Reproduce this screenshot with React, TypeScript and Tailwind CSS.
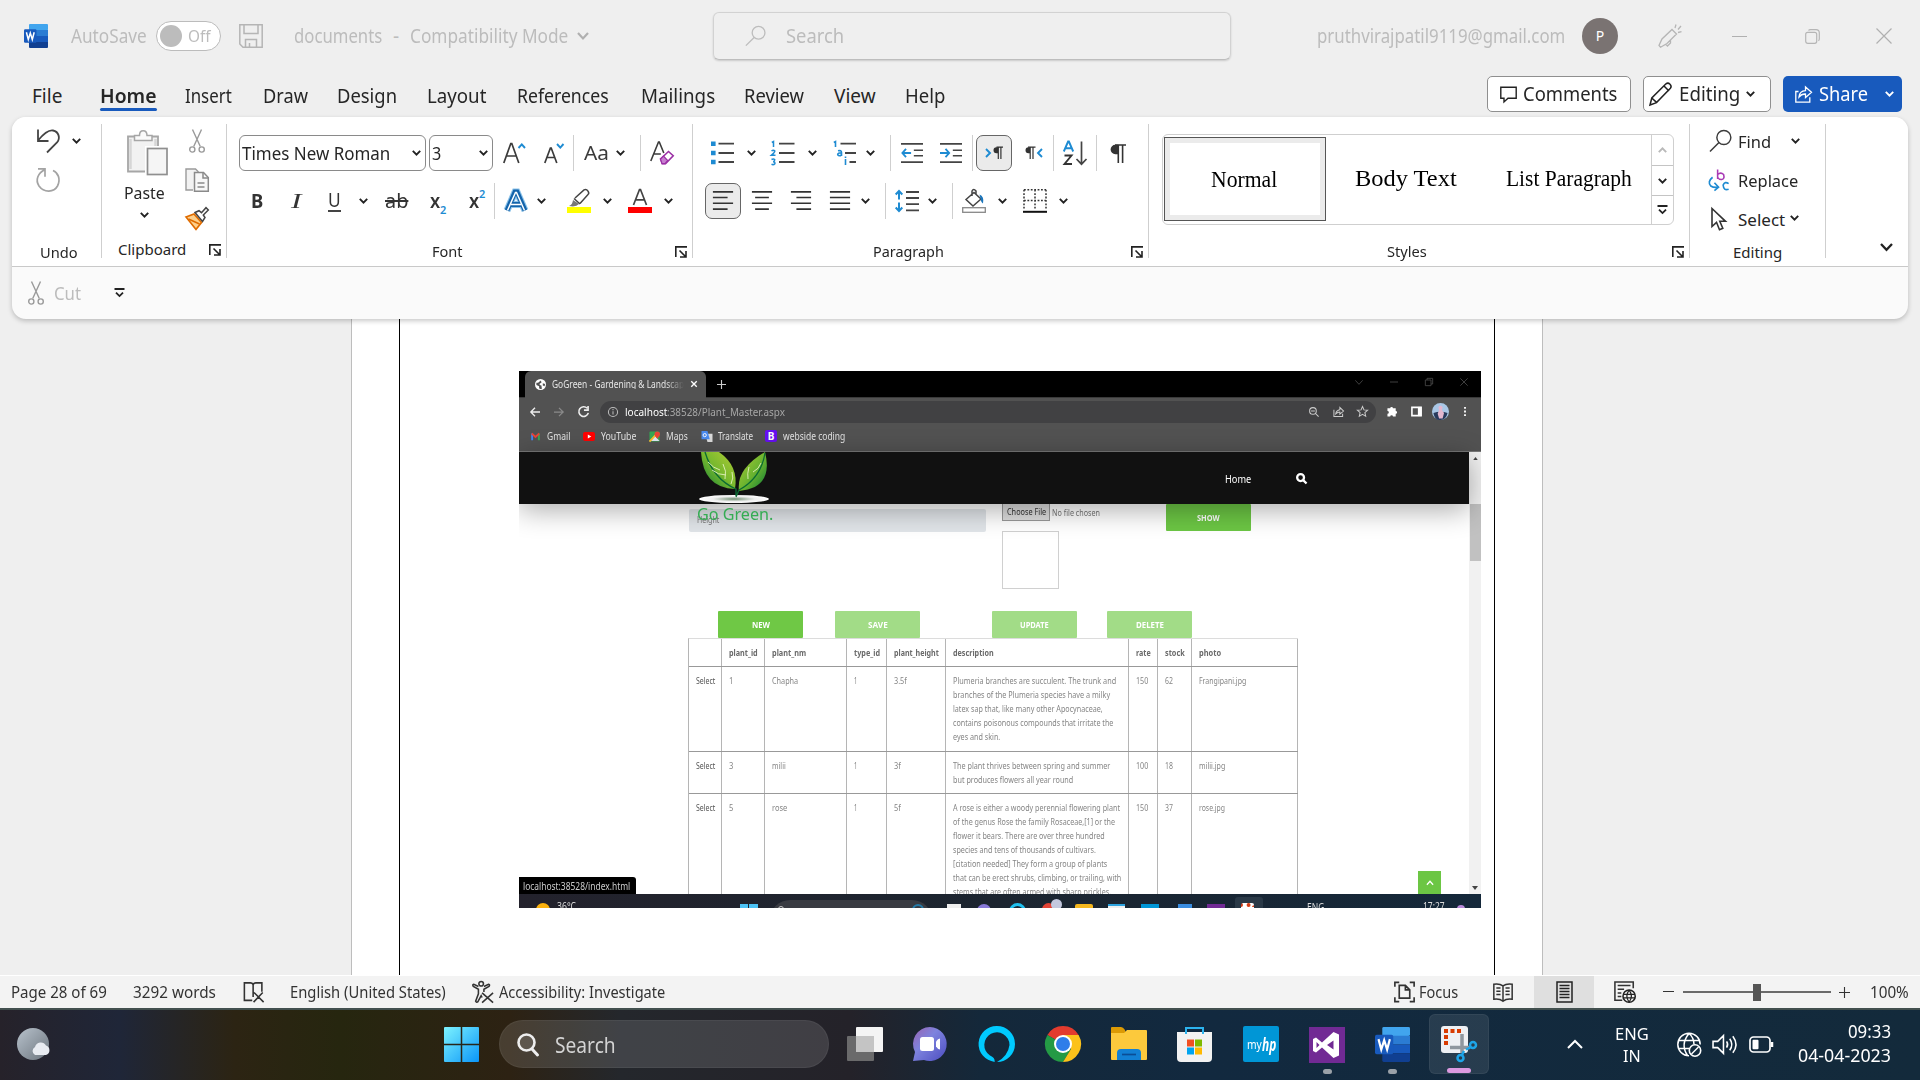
import React, { useLayoutEffect, useRef, useState } from "react";

/* Text squeezed or stretched horizontally to a given width. */
function T({ w, className = "", children }: { w: number; className?: string; children: React.ReactNode }) {
  const ref = useRef<HTMLSpanElement>(null);
  const [scale, setScale] = useState(1);
  useLayoutEffect(() => {
    if (ref.current) setScale(w / ref.current.offsetWidth);
  }, [w]);
  return (
    <span className={"block shrink-0 " + className} style={{ width: w }}>
      <span ref={ref} className="inline-block origin-left whitespace-nowrap" style={{ transform: `scaleX(${scale})` }}>
        {children}
      </span>
    </span>
  );
}

type IP = { className?: string; children?: React.ReactNode; box?: string };
const Svg = ({ className = "", children, box = "0 0 24 24" }: IP) => (
  <svg viewBox={box} fill="none" className={"block shrink-0 overflow-visible " + className}>
    {children}
  </svg>
);
const Chev = ({ className = "" }: { className?: string }) => (
  <Svg box="0 0 9 6" className={"h-[6px] w-[9px] text-[#222] " + className}>
    <path d="M.8.8 4.5 4.6 8.2.8" stroke="currentColor" strokeWidth="1.9" />
  </Svg>
);
const Sep = ({ className = "" }: { className?: string }) => <div className={"h-[36px] w-px shrink-0 bg-[#cfcfcf] " + className} />;
const Launcher = ({ className = "" }: { className?: string }) => (
  <Svg box="0 0 12 12" className={"h-[12px] w-[12px] " + className}>
    <path d="M.8 11V.9H12M4.5 4.5l6 6M11 5v6H5" stroke="#222" strokeWidth="1.6" />
  </Svg>
);
const More = ({ className = "" }: { className?: string }) => (
  <Svg box="0 0 11 10" className={"h-[10px] w-[11px] " + className}>
    <path d="M.5 1h10M2 4.6l3.5 3.5L9 4.6" stroke="#222" strokeWidth="1.8" />
  </Svg>
);
const Scissors = ({ className = "" }: { className?: string }) => (
  <Svg box="0 0 16 24" className={className}>
    <g stroke="#9a9a9a" strokeWidth="1.4">
      <path d="M3.5.5 11.3 17.5M12.5.5 4.7 17.5" />
      <circle cx="3.3" cy="20.5" r="2.6" />
      <circle cx="12.7" cy="20.5" r="2.6" />
    </g>
  </Svg>
);
const Magnifier = ({ className = "" }: { className?: string }) => (
  <Svg className={className}>
    <circle cx="15.5" cy="8.3" r="7.3" stroke="currentColor" strokeWidth="1.5" />
    <path d="M10.4 13.6 1 23" stroke="currentColor" strokeWidth="1.6" />
  </Svg>
);
const WordIcon = ({ className = "" }: { className?: string }) => (
  <Svg className={className}>
    <rect x="5" y="0" width="19" height="6.2" rx="1" fill="#41a5ee" />
    <rect x="5" y="6" width="19" height="6" fill="#2b7cd3" />
    <rect x="5" y="12" width="19" height="6" fill="#185abd" />
    <path d="M5 18h19v5a1 1 0 0 1-1 1H6a1 1 0 0 1-1-1z" fill="#103f91" />
    <rect x="0" y="5.3" width="12.5" height="13.4" rx="1.2" fill="#185abd" />
    <path d="m2.4 8.3 1.9 7.2 2-6.4 2 6.4 1.9-7.2" stroke="#fff" strokeWidth="1.5" />
  </Svg>
);

const tabs: [string, number, string][] = [
  ["File", 30, "ml-[32px]"],
  ["Home", 56, "ml-[38px]"],
  ["Insert", 47, "ml-[28px]"],
  ["Draw", 45, "ml-[31px]"],
  ["Design", 60, "ml-[29px]"],
  ["Layout", 59, "ml-[30px]"],
  ["References", 92, "ml-[31px]"],
  ["Mailings", 74, "ml-[32px]"],
  ["Review", 60, "ml-[29px]"],
  ["View", 42, "ml-[30px]"],
  ["Help", 40, "ml-[29px]"],
];

function TitleBar() {
  return (
    <div className="flex h-[72px] items-center text-[19px] leading-none text-[#bcbcbc]">
      <WordIcon className="ml-[24px] h-[24px] w-[24px]" />
      <T w={76} className="ml-[23px]">AutoSave</T>
      <div className="ml-[9px] flex h-[30px] w-[65px] items-center rounded-full border border-[#bcbcbc] bg-white">
        <div className="ml-[3px] h-[22px] w-[22px] rounded-full bg-[#bcbcbc]" />
        <T w={23} className="ml-[6px] text-[16px]">Off</T>
      </div>
      <Svg className="ml-[18px] h-[24px] w-[24px]">
        <path d="M.8.8h22.4v22.4H4L.8 20zM5 1v8.5h14V1M6.5 23v-7.5h11V23M10.5 23v-4" stroke="#b5b5b5" strokeWidth="1.5" />
      </Svg>
      <T w={88} className="ml-[31px]">documents</T>
      <T w={6} className="ml-[11px]">-</T>
      <T w={158} className="ml-[11px]">Compatibility Mode</T>
      <Svg box="0 0 12 8" className="ml-[9px] h-[8px] w-[12px]"><path d="m1 1 5 5.4L11 1" stroke="#b0b0b0" strokeWidth="2.2" /></Svg>
      <div className="ml-[124px] flex h-[48px] w-[518px] items-center rounded-[6px] border border-[#d2d2d2] border-b-[#bdbdbd] shadow-[0_1px_2px_#00000028]">
        <Magnifier className="ml-[31px] h-[22px] w-[21px] text-[#bdbdbd]" />
        <T w={58} className="ml-[20px]">Search</T>
      </div>
      <T w={248} className="ml-[86px]">pruthvirajpatil9119@gmail.com</T>
      <div className="ml-[17px] flex h-[36px] w-[36px] items-center justify-center rounded-full bg-[#7a7372] text-[14px] text-white">P</div>
      <Svg className="ml-[40px] h-[24px] w-[24px]">
        <path d="M14 5.5 18.5 10 9 19.5 2.5 23.2 1 21.5 4 15zM12.5 16v3l-3 3-1.7-1.8M17 4l1-3.5M20 5.5l3-3.5M20 8.5l3.5-.8" stroke="#b5b5b5" strokeWidth="1.3" />
      </Svg>
      <div className="ml-[50px] h-px w-[15px] bg-[#b0b0b0]" />
      <Svg box="0 0 15 15" className="ml-[58px] h-[15px] w-[15px]">
        <rect x=".7" y="3.3" width="11" height="11" rx="2" stroke="#b5b5b5" strokeWidth="1.2" />
        <path d="M3.5 1.5Q4 .7 5.5.7H11a3.3 3.3 0 0 1 3.3 3.3v6q0 1-.9 1.7" stroke="#b5b5b5" strokeWidth="1.2" />
      </Svg>
      <Svg box="0 0 16 16" className="ml-[56px] h-[16px] w-[16px]"><path d="m.5.5 15 15m0-15-15 15" stroke="#b0b0b0" strokeWidth="1.2" /></Svg>
    </div>
  );
}

function TabBar() {
  return (
    <div className="flex h-[45px] text-[19px] leading-none text-[#262626]">
      {tabs.map(([name, w, gap]) => (
        <div key={name} className={"flex h-[41px] flex-col pt-[15px] " + gap + (name === "Home" ? " font-semibold" : "")}>
          <T w={w}>{name}</T>
          {name === "Home" && <div className="mt-[2px] h-[3px] w-[57px] shrink-0 rounded bg-[#185abd]" />}
        </div>
      ))}
      <div className="mt-[4px] mr-[18px] ml-auto flex h-[36px]">
        <div className="flex w-[144px] items-center rounded-[5px] border border-[#8f8f8f] bg-white">
          <Svg box="0 0 17 17" className="ml-[12px] h-[17px] w-[17px]"><path d="M.8 1.2h15.4v11H8l-4 3.7v-3.7H.8z" stroke="#222" strokeWidth="1.4" /></Svg>
          <T w={94} className="ml-[6px]">Comments</T>
        </div>
        <div className="ml-[12px] flex w-[128px] items-center rounded-[5px] border border-[#8f8f8f] bg-white">
          <Svg className="ml-[5px] h-[24px] w-[24px]"><path d="m1 23 1.8-7L17 1.8q2-1.5 4 .4t.4 4L7.5 20.6zM15 4l5 5M2.8 16l5 4.6" stroke="#222" strokeWidth="1.5" /></Svg>
          <T w={61} className="ml-[6px]">Editing</T>
          <Chev className="ml-[6px]" />
        </div>
        <div className="ml-[12px] flex w-[119px] items-center rounded-[5px] bg-[#185abd] text-white">
          <Svg box="0 0 17 18" className="ml-[12px] h-[18px] w-[17px]">
            <path d="M3.5 6.5H.8v10.7h14v-5M4 12q.5-6 6.5-6.3V2l6 5.3-6 5.2V9Q6.500 8.800 4 12Z" stroke="#fff" strokeWidth="1.3" />
          </Svg>
          <T w={49} className="ml-[7px]">Share</T>
          <Chev className="ml-[17px] text-white" />
        </div>
      </div>
    </div>
  );
}

const aligns = {
  left: "M1 2h22M1 8.200h16M1 14.500h22M1 20.800h16",
  center: "M1 2h22M4.500 8.200h15M1 14.500h22M4.500 20.800h15",
  right: "M1 2h22M7 8.200h16M1 14.500h22M7 20.800h16",
  justify: "M1 2h22M1 8.200h22M1 14.500h22M1 20.800h22",
};
const Align = ({ d, className = "" }: { d: string; className?: string }) => (
  <Svg className={"h-[22px] w-[22px] " + className}><path d={d} stroke="#333" strokeWidth="1.8" /></Svg>
);

function FontGroup() {
  return (
    <div className="flex h-[134px] w-[466px] flex-col border-r border-[#cfcfcf] pt-[11px] leading-none">
      <div className="flex h-[36px] items-center text-[18px]">
        <div className="ml-[12px] flex h-[36px] w-[187px] items-center rounded-[6px] border border-[#8a8a8a]">
          <T w={148} className="ml-[2px]">Times New Roman</T>
          <Chev className="ml-[22px]" />
        </div>
        <div className="ml-[3px] flex h-[36px] w-[64px] items-center rounded-[6px] border border-[#8a8a8a]">
          <T w={9} className="ml-[2px]">3</T>
          <Chev className="ml-[38px]" />
        </div>
        <Svg box="0 0 22 22" className="ml-[10px] h-[22px] w-[22px]">
          <path d="m.8 21 7-19.500h1l7 19.500M3.500 14h9.800" stroke="#3b3b3b" strokeWidth="1.700" />
          <path d="m15.500 6 3.300-3.600L22 6" stroke="#1e8bd2" strokeWidth="1.900" />
        </Svg>
        <Svg box="0 0 20 22" className="ml-[19px] h-[22px] w-[20px]">
          <path d="m.8 21 5.600-15h.8l5.600 15M3 15.500h7.500" stroke="#3b3b3b" strokeWidth="1.700" />
          <path d="m13 2 3.300 3.600L19.500 2" stroke="#1e8bd2" strokeWidth="1.900" />
        </Svg>
        <Sep className="ml-[9px]" />
        <T w={25} className="ml-[10px] text-[20px] text-[#3b3b3b]">Aa</T>
        <Chev className="ml-[7px]" />
        <Sep className="ml-[15px]" />
        <Svg className="ml-[9px] h-[24px] w-[24px]">
          <path d="m.8 20 7.700-19h.8l4.500 11M3.800 13h7" stroke="#3b3b3b" strokeWidth="1.600" />
          <path d="m10.500 18 8-7.500 4.700 4.200-7.700 8h-3.200z" fill="#fff" stroke="#9b2fa5" strokeWidth="1.600" />
          <path d="m10.500 18 3-3 4.200 4.500-2.700 3.200h-3z" fill="#c77fd0" stroke="#9b2fa5" strokeWidth="1.200" />
        </Svg>
      </div>
      <div className="mt-[12px] flex h-[36px] items-center text-[20px] text-[#333]">
        <T w={12} className="ml-[24px] font-bold">B</T>
        <T w={10} className="ml-[28px] font-['Liberation_Serif'] text-[22px] italic">I</T>
        <div className="ml-[27px] mt-[1px] border-b-2 border-[#444] pb-px"><T w={13} className="h-[18px] leading-[18px]">U</T></div>
        <Chev className="ml-[18px]" />
        <T w={23} className="ml-[17px] text-[19px]"><span className="line-through decoration-[1.5px]">ab</span></T>
        <div className="ml-[22px] flex w-[17px] items-center font-semibold">
          <T w={10}>x</T><T w={6} className="mt-[16px] text-[11px] text-[#1e8bd2]">2</T>
        </div>
        <div className="ml-[22px] flex w-[17px] items-center font-semibold">
          <T w={10}>x</T><T w={6} className="mb-[16px] text-[11px] text-[#1e8bd2]">2</T>
        </div>
        <Sep className="ml-[8px]" />
        <Svg className="ml-[9px] h-[24px] w-[24px]">
          <path d="m3 21.500 8-18.500h2l8 18.500M6 15.500h12" stroke="#8cc3ea" strokeWidth="7" />
          <path d="m3 21.500 8-18.500h2l8 18.500M6 15.500h12" stroke="#1464ab" strokeWidth="4.800" />
          <path d="m3.500 21.500 8-18h1l8 18M7 15.500h10" stroke="#fff" strokeWidth="1.500" />
        </Svg>
        <Chev className="ml-[9px]" />
        <Svg className="ml-[21px] h-[24px] w-[24px]">
          <path d="M2 17c3-1 3.500-3 4-6l6 4q-3 3.500-10 2Z" fill="#777" />
          <path d="M8 9 17 .9q2.500-1 4 1.300t0 3.300L13 14.500M7 9.500l6 5.500" stroke="#444" strokeWidth="1.500" />
          <rect y="18" width="24" height="6" fill="#ff0" />
        </Svg>
        <Chev className="ml-[12px]" />
        <Svg className="ml-[16px] h-[24px] w-[24px]">
          <path d="m5.500 16 6-15.500h1l6 15.500M8 10.800h8" stroke="#444" strokeWidth="1.700" />
          <rect y="18" width="24" height="6" fill="#f00" />
        </Svg>
        <Chev className="ml-[12px]" />
      </div>
      <div className="mt-[25px] flex h-[16px] shrink-0 items-center text-[15px]">
        <T w={31} className="mb-[2px] ml-[205px]">Font</T>
        <Launcher className="mr-[5px] ml-auto" />
      </div>
    </div>
  );
}

function ParagraphGroup() {
  const blue = "#1e8bd2";
  return (
    <div className="flex h-[134px] w-[456px] flex-col border-r border-[#cfcfcf] pt-[11px] leading-none">
      <div className="flex h-[36px] items-center">
        <Svg className="ml-[18px] h-[24px] w-[24px]">
          <path d="M0 2.700h4.600M0 12h4.600M0 21h4.600" stroke={blue} strokeWidth="4.600" />
          <path d="M7.500 2.700H23M7.500 12H23M7.500 21H23" stroke="#444" strokeWidth="1.800" />
        </Svg>
        <Chev className="ml-[12px]" />
        <Svg className="ml-[15px] h-[24px] w-[24px]">
          <path d="M.8 1.500 2.500.6V6M.5 10q2-1.700 3.300 0 0 1.500-3.300 4.200H4.500M.5 18.500q2-1 3.200 0 .3 1.700-1.500 2.200 2 .3 1.700 2Q2.500 24.200.5 23.300" stroke={blue} strokeWidth="1.500" />
          <path d="M8 2.700h15.500M8 12h15.500M8 21h15.500" stroke="#444" strokeWidth="1.800" />
        </Svg>
        <Chev className="ml-[13px]" />
        <Svg className="ml-[16px] h-[24px] w-[24px]">
          <path d="M.8 1.500 2.500.6V6M5 9.800q3.500-.8 3.500 1.700V15M8.500 12.200Q4.500 11.500 4.700 13.800q1.500 2 3.800 0M12.500 18v6M12.500 15.500v1.500" stroke={blue} strokeWidth="1.600" />
          <path d="M7.500 2.700H23M12 12H23M16.500 21H23" stroke="#444" strokeWidth="1.800" />
        </Svg>
        <Chev className="ml-[9px]" />
        <Sep className="ml-[15px]" />
        <Svg className="ml-[10px] h-[22px] w-[22px]">
          <path d="M0 2h24M14 9h10M14 15h10M0 22h24" stroke="#444" strokeWidth="1.800" />
          <path d="M11 12H1.500M5.500 7.500 1.500 12l4 4.500" stroke={blue} strokeWidth="2" />
        </Svg>
        <Svg className="ml-[17px] h-[22px] w-[22px]">
          <path d="M0 2h24M14 9h10M14 15h10M0 22h24" stroke="#444" strokeWidth="1.800" />
          <path d="M0 12h9.500M6 7.500l4 4.500-4 4.500" stroke={blue} strokeWidth="2" />
        </Svg>
        <Sep className="ml-[10px]" />
        <div className="ml-[3px] flex h-[36px] w-[36px] items-center rounded-[7px] border border-[#666] bg-[#ebebeb]">
          <Svg box="0 0 18 14" className="ml-[8px] h-[14px] w-[18px]">
            <path d="m1 3 4 4-4 4" stroke={blue} strokeWidth="1.900" />
            <path d="M17.500 1.200H11.500a3 3 0 0 0 0 6h1.500V1.500z" fill="#333" /><path d="M11.500 1.200h6.500M13.300 1.200V13M15.900 1.200V13" stroke="#333" strokeWidth="1.200" />
          </Svg>
        </div>
        <Svg box="0 0 18 14" className="ml-[13px] h-[14px] w-[18px]">
          <path d="m17 3-4 4 4 4" stroke={blue} strokeWidth="1.900" />
          <path d="M8 1.200H3.500a3 3 0 0 0 0 6H5V1.500z" fill="#333" /><path d="M3 1.200h7.500M5.200 1.200V13M8 1.200V13" stroke="#333" strokeWidth="1.200" />
        </Svg>
        <Sep className="ml-[10px]" />
        <Svg className="ml-[9px] h-[24px] w-[24px]">
          <path d="m.8 10.500 4.300-10h.8l4.300 10M2.300 7.300h6.500" stroke={blue} strokeWidth="1.900" />
          <path d="M1.500 14.500h7L1.500 23h7.500" stroke="#333" strokeWidth="1.900" />
          <path d="M18.500.5V23M13.500 18l5 5.200 5-5.200" stroke="#444" strokeWidth="1.700" />
        </Svg>
        <Sep className="ml-[9px]" />
        <Svg box="0 0 16 19" className="ml-[13px] h-[19px] w-[16px]">
          <path d="M9 .8H5.300a4.700 4.700 0 0 0 0 9.400H8V1z" fill="#333" /><path d="M5 1h11M8.300 1v18M12.600 1v18" stroke="#333" strokeWidth="1.600" />
        </Svg>
      </div>
      <div className="mt-[12px] flex h-[36px] items-center">
        <div className="ml-[12px] flex h-[36px] w-[36px] items-center justify-center rounded-[7px] border border-[#666] bg-[#ebebeb]"><Align d={aligns.left} /></div>
        <Align d={aligns.center} className="ml-[10px]" />
        <Align d={aligns.right} className="ml-[17px]" />
        <Align d={aligns.justify} className="ml-[17px]" />
        <Chev className="ml-[10px]" />
        <Sep className="ml-[15px]" />
        <Svg className="ml-[9px] h-[24px] w-[24px]">
          <path d="M4 2v8.500M.7 5.500 4 2l3.300 3.500M4 13.500V22M.7 18.500 4 22l3.300-3.500" stroke={blue} strokeWidth="2" />
          <path d="M11 3h13M11 9h13M11 15.200h13M11 21.300h13" stroke="#444" strokeWidth="1.800" />
        </Svg>
        <Chev className="ml-[9px]" />
        <Sep className="ml-[15px]" />
        <Svg className="ml-[9px] h-[24px] w-[24px]">
          <path d="m4 10.500 8-7 7 6.500-8 7zM10 7V2q1.500-3 4 0v3" stroke="#444" strokeWidth="1.500" />
          <path d="M17.500 5.500q5 2 3.500 9-2-1-2.500-5z" fill="#1b75bb" />
          <rect x=".7" y="18.700" width="22.600" height="4.600" stroke="#888" strokeWidth="1.300" />
        </Svg>
        <Chev className="ml-[12px]" />
        <Svg className="ml-[16px] h-[24px] w-[24px]">
          <path d="M1 .8h22M1 .8v20M23 .8v20M12 .8v20M1 11.500h22" stroke="#333" strokeWidth="1.500" strokeDasharray="1.800 1.600" />
          <path d="M0 22.800h24" stroke="#111" strokeWidth="2" />
        </Svg>
        <Chev className="ml-[12px]" />
      </div>
      <div className="mt-[25px] flex h-[16px] shrink-0 items-center text-[15px]">
        <T w={71} className="mb-[2px] ml-[180px]">Paragraph</T>
        <Launcher className="mr-[5px] ml-auto" />
      </div>
    </div>
  );
}

function StylesGroup() {
  return (
    <div className="flex h-[134px] w-[541px] flex-col border-r border-[#cfcfcf] pt-[10px] leading-none">
      <div className="ml-[13px] flex h-[91px] w-[512px] rounded-[6px] border border-[#cfcfcf] font-['Liberation_Serif'] text-[23px] text-black">
        <div className="mt-[2px] ml-px flex h-[84px] w-[162px] shrink-0 items-center justify-center border border-[#555] bg-[#ebebeb] p-[5px]">
          <div className="flex h-full w-full items-center justify-center bg-white pr-[2px]"><T w={66}>Normal</T></div>
        </div>
        <div className="flex items-center pb-[3px]">
          <T w={102} className="ml-[29px]">Body Text</T>
          <T w={126} className="ml-[49px]">List Paragraph</T>
        </div>
        <div className="ml-auto flex w-[22px] flex-col items-center border-l border-[#cfcfcf]">
          <div className="flex h-[31px] w-full items-center justify-center border-b border-[#c4c4c4]"><Chev className="rotate-180 text-[#b9b9b9]" /></div>
          <div className="flex h-[30px] w-full items-center justify-center border-b border-[#c4c4c4]"><Chev /></div>
          <div className="flex h-[28px] w-full items-center justify-center"><More className="h-[9px] w-[10px]" /></div>
        </div>
      </div>
      <div className="mt-[19px] flex h-[16px] shrink-0 items-center text-[15px]">
        <T w={40} className="mb-[2px] ml-[238px]">Styles</T>
        <Launcher className="mr-[5px] ml-auto" />
      </div>
    </div>
  );
}

function Ribbon() {
  return (
    <div className="relative z-10 mx-[12px] h-[202px] rounded-[14px] bg-[#fafafa] text-[#262626] shadow-[0_2px_5px_#00000038]">
      <div className="flex h-[150px] rounded-t-[14px] border-b border-[#c9c9c9] bg-white pt-[7px] leading-none">
        <div className="flex h-[134px] w-[90px] flex-col border-r border-[#cfcfcf] pt-[5px]">
          <div className="flex items-center">
            <Svg className="ml-[24px] h-[24px] w-[24px]"><path d="M2 .5v11.500h10.500M2 11.500C9 3 13 .8 17 1.500c6 1 7.500 8 4 12L11 23.500" stroke="#444" strokeWidth="1.800" /></Svg>
            <Chev className="ml-[12px]" />
          </div>
          <Svg className="mt-[15px] ml-[24px] h-[24px] w-[24px]"><path d="M2 .8h7v8M9 1.500C2 5-1 12 3 18c5 7 15 6.500 18.500 0C25 11 22 4.500 17 2.500" stroke="#a3a3a3" strokeWidth="1.700" /></Svg>
          <div className="mt-[53px] ml-[28px] text-[15px]"><T w={38}>Undo</T></div>
        </div>
        <div className="flex h-[134px] w-[125px] flex-col border-r border-[#cfcfcf] pt-[5px]">
          <div className="flex h-[112px]">
            <div className="ml-[20px] flex w-[45px] flex-col items-center">
              <Svg box="0 0 41 45" className="mt-px ml-[6px] h-[45px] w-[41px]">
                <path d="M1 6.500h30v35H1z" fill="#f2f2f2" stroke="#a6a6a6" strokeWidth="1.800" />
                <path d="M3.500 9v30M28.500 9v20" stroke="#d6d6d6" strokeWidth="2.500" />
                <path d="M7.500 10.500V5.500h5q0-4.700 3.700-4.700T20 5.500h5v5z" fill="#fafafa" stroke="#a6a6a6" strokeWidth="1.500" />
                <rect x="18" y="16" width="23" height="30" fill="#fff" />
                <rect x="20.500" y="18.500" width="19.500" height="26" fill="#f5f5f5" stroke="#8f8f8f" strokeWidth="1.700" />
              </Svg>
              <T w={41} className="mt-[9px] text-[17px]">Paste</T>
              <Chev className="mt-[11px]" />
            </div>
            <div className="ml-[18px] flex w-[24px] flex-col items-center">
              <Scissors className="h-[24px] w-[16px]" />
              <Svg className="mt-[15px] h-[24px] w-[24px]">
                <path d="M8 22H1V1h9.500l3 3" fill="#f2f2f2" stroke="#9a9a9a" strokeWidth="1.400" />
                <path d="M9.500 4.500h9l4.800 5v13.800H9.500z" fill="#f7f7f7" stroke="#8a8a8a" strokeWidth="1.500" />
                <path d="M18 5v5h5M12.500 15h7M12.500 19h7" stroke="#8a8a8a" strokeWidth="1.500" />
              </Svg>
              <Svg className="mt-[15px] h-[24px] w-[24px]">
                <path d="M1 10 9 7l7.500 8.500L11 22.500z" fill="#fdd08c" stroke="#e06c00" strokeWidth="1.700" />
                <path d="m3.500 12 11 5" stroke="#e06c00" strokeWidth="1.500" />
                <path d="m10 5.500 4-1.800 2.500 2 4.500-5 2.300 2.300-5 5 1.700 2.500-2.500 4z" fill="#fff" stroke="#444" strokeWidth="1.500" />
              </Svg>
            </div>
          </div>
          <div className="mt-[5px] flex h-[16px] shrink-0 items-center text-[15px]">
            <T w={68} className="mb-[2px] ml-[16px]">Clipboard</T>
            <Launcher className="mr-[5px] ml-auto" />
          </div>
        </div>
        <FontGroup />
        <ParagraphGroup />
        <StylesGroup />
        <div className="flex h-[134px] w-[136px] flex-col border-r border-[#cfcfcf] pt-[5px] text-[17px]">
          <div className="flex h-[24px] items-center">
            <Magnifier className="ml-[19px] h-[24px] w-[23px] text-[#3b3b3b]" />
            <T w={33} className="ml-[6px]">Find</T><Chev className="ml-[20px]" />
          </div>
          <div className="mt-[15px] flex h-[24px] items-center">
            <Svg className="ml-[18px] h-[24px] w-[22px]">
              <path d="M10.500.5V11M10.500 6q3.500-3 6.500 0 1.500 5-2 5.500-3 .3-4.500-2.500" stroke="#a93bb5" strokeWidth="1.700" />
              <path d="M22.500 16q-4-3-6 1.500.5 6.500 6 4.500M5 9Q-1 14 3 18.500q3 2 7.500 1.500M7 15l4.500 4.800L7 23.500" stroke="#1e8bd2" strokeWidth="1.800" />
            </Svg>
            <T w={60} className="ml-[8px]">Replace</T>
          </div>
          <div className="mt-[15px] flex h-[24px] items-center">
            <Svg box="0 0 17 24" className="ml-[20px] h-[24px] w-[17px]">
              <path d="M2 1.500v18l4.500-4.200 3 7.500 3.300-1.500-3-7H15.500z" stroke="#333" strokeWidth="1.600" />
            </Svg>
            <T w={47} className="ml-[11px]">Select</T><Chev className="mb-[2px] ml-[5px]" />
          </div>
          <div className="mt-[14px] ml-[43px] text-[15px]"><T w={49}>Editing</T></div>
        </div>
        <Svg box="0 0 13 9" className="mt-[119px] ml-[54px] h-[9px] w-[13px]"><path d="m1 1 5.500 5.800L12 1" stroke="#222" strokeWidth="2.300" /></Svg>
      </div>
      <div className="flex h-[52px] items-center text-[18px] leading-none text-[#bcbcbc]">
        <Scissors className="ml-[16px] h-[24px] w-[16px]" />
        <T w={27} className="ml-[10px]">Cut</T>
        <More className="ml-[33px]" />
      </div>
    </div>
  );
}

const plants: { id: string; nm: string; h: string; rate: string; stock: string; photo: [string, number]; nmW: number; size: string; lines: [string, number][] }[] = [
  {
    id: "1", nm: "Chapha", nmW: 26, h: "3.5f", rate: "150", stock: "62", photo: ["Frangipani.jpg", 47], size: "h-[85px]",
    lines: [["Plumeria branches are succulent. The trunk and", 163], ["branches of the Plumeria species have a milky", 157], ["latex sap that, like many other Apocynaceae,", 150], ["contains poisonous compounds that irritate the", 160], ["eyes and skin.", 47]],
  },
  {
    id: "3", nm: "milii", nmW: 14, h: "3f", rate: "100", stock: "18", photo: ["milii.jpg", 26], size: "h-[42px]",
    lines: [["The plant thrives between spring and summer", 157], ["but produces flowers all year round", 120]],
  },
  {
    id: "5", nm: "rose", nmW: 15, h: "5f", rate: "150", stock: "37", photo: ["rose.jpg", 26], size: "h-[112px]",
    lines: [["A rose is either a woody perennial flowering plant", 167], ["of the genus Rose the family Rosaceae,[1] or the", 162], ["flower it bears. There are over three hundred", 152], ["species and tens of thousands of cultivars.", 143], ["[citation needed] They form a group of plants", 154], ["that can be erect shrubs, climbing, or trailing, with", 168], ["stems that are often armed with sharp prickles.", 158]],
  },
];
const row = "grid grid-cols-[33px_43px_82px_40px_59px_183px_29px_34px_106px] border-b border-[#999]";
const cell = "border-r border-[#b5b5b5] pl-[7px] pt-[7px]";

function PlantTable() {
  return (
    <div className="ml-[169px] w-[610px] border-t border-l border-[#b5b5b5] border-t-[#dcdcdc] text-[9.5px] leading-[14px] text-[#858585]">
      <div className={row + " h-[28px] font-bold text-[#6a6a6a]"}>
        <div className={cell} />
        <div className={cell}><T w={29}>plant_id</T></div>
        <div className={cell}><T w={34}>plant_nm</T></div>
        <div className={cell}><T w={26}>type_id</T></div>
        <div className={cell}><T w={45}>plant_height</T></div>
        <div className={cell}><T w={41}>description</T></div>
        <div className={cell}><T w={15}>rate</T></div>
        <div className={cell}><T w={20}>stock</T></div>
        <div className={cell}><T w={22}>photo</T></div>
      </div>
      {plants.map((p) => (
        <div key={p.id} className={row + " " + p.size}>
          <div className={cell + " text-[#555]"}><T w={19}>Select</T></div>
          <div className={cell}><T w={4}>{p.id}</T></div>
          <div className={cell}><T w={p.nmW}>{p.nm}</T></div>
          <div className={cell}><T w={3}>1</T></div>
          <div className={cell}><T w={p.h === "3.5f" ? 13 : 7}>{p.h}</T></div>
          <div className={cell}>{p.lines.map(([t, w]) => <T key={t} w={w}>{t}</T>)}</div>
          <div className={cell}><T w={12}>{p.rate}</T></div>
          <div className={cell}><T w={8}>{p.stock}</T></div>
          <div className={cell}><T w={p.photo[1]}>{p.photo[0]}</T></div>
        </div>
      ))}
    </div>
  );
}

const pageButton = "flex h-[27px] w-[85px] shrink-0 items-center justify-center rounded-[1px] text-[9px] font-bold text-white";

function BrowserShot() {
  return (
    <div className="relative h-[537px] w-[962px] overflow-hidden bg-white leading-none">
      <div className="flex h-[27px] items-center border-b border-[#3a3a3a] bg-black">
        <div className="ml-[6px] flex h-[27px] w-[181px] items-center rounded-t-[6px] bg-[#525252] text-[10px] text-[#e6e6e6]">
          <Svg className="ml-[10px] h-[11px] w-[11px]"><circle cx="12" cy="12" r="12" fill="#fff" /><path d="M3 8q7 0 8-5 4 2 3 5-5 1-4 5l4 1 1 7q-4 2-6-1l0-4-6-3zM17 9l5 2-1 5-4-2z" fill="#525252" /></Svg>
          <T w={132} className="ml-[6px] [mask-image:linear-gradient(90deg,#000_86%,transparent)]">GoGreen - Gardening &amp; Landscap</T>
          <Svg className="ml-[7px] h-[6px] w-[6px]"><path d="m1 1 22 22m0-22L1 23" stroke="#fff" strokeWidth="5.500" /></Svg>
        </div>
        <Svg className="ml-[11px] h-[9px] w-[9px]"><path d="M12 0v24M0 12h24" stroke="#ccc" strokeWidth="3" /></Svg>
        <div className="mr-[13px] mb-[4px] ml-auto flex items-center gap-[27px] text-[#4a4a4a]">
          <Svg className="h-[8px] w-[8px]"><path d="m1 7 11 12L23 7" stroke="currentColor" strokeWidth="2.500" /></Svg>
          <Svg className="h-[8px] w-[8px]"><path d="M0 12h24" stroke="currentColor" strokeWidth="2.500" /></Svg>
          <Svg className="h-[8px] w-[8px]"><path d="M1 6h17v17H1zM6 6V1h17v17h-5" stroke="currentColor" strokeWidth="2.500" /></Svg>
          <Svg className="h-[8px] w-[8px]"><path d="m1 1 22 22m0-22L1 23" stroke="currentColor" strokeWidth="2.500" /></Svg>
        </div>
      </div>
      <div className="flex h-[27px] items-center bg-[#525252]">
        <Svg className="ml-[11px] h-[10px] w-[10px]"><path d="M24 12H2M12 2 2 12l10 10" stroke="#eee" strokeWidth="3.200" /></Svg>
        <Svg className="ml-[14px] h-[10px] w-[10px]"><path d="M0 12h22M12 2l10 10-10 10" stroke="#8a8a8a" strokeWidth="3" /></Svg>
        <Svg className="ml-[14px] h-[11px] w-[11px]"><path d="M20 5a10.500 10.500 0 1 0 2.500 10M22 0v9h-9" stroke="#eee" strokeWidth="3.500" /></Svg>
        <div className="ml-[11px] flex h-[22px] w-[776px] items-center rounded-full bg-[#414143] text-[11px] text-[#a6a6a6]">
          <Svg className="ml-[8px] h-[10px] w-[10px]"><circle cx="12" cy="12" r="11" stroke="#bbb" strokeWidth="2.500" /><path d="M12 10v8M12 5v3" stroke="#bbb" strokeWidth="2.500" /></Svg>
          <T w={42} className="ml-[7px] text-white">localhost</T>
          <T w={118}>:38528/Plant_Master.aspx</T>
          <Svg className="ml-auto h-[10px] w-[10px]"><circle cx="9.500" cy="9.500" r="8" stroke="#ccc" strokeWidth="2.500" /><path d="m15 15 8 8M5 9.500h9" stroke="#ccc" strokeWidth="2.500" /></Svg>
          <Svg className="ml-[14px] h-[11px] w-[11px]"><path d="M2 8v15h19v-6M6 17q1-8 9-9V3l8 8-8 7v-5q-5 0-9 4Z" stroke="#ccc" strokeWidth="2.200" /></Svg>
          <Svg className="mr-[8px] ml-[13px] h-[11px] w-[11px]"><path d="m12 1 3.200 7.500 8 .7-6 5.300 1.800 8L12 18.300 5 22.500l1.800-8-6-5.300 8-.7z" stroke="#ccc" strokeWidth="2.200" /></Svg>
        </div>
        <Svg className="ml-[11px] h-[11px] w-[11px]"><path d="M1 5h6a3 3 0 1 1 6 0h6v6a3 3 0 1 1 0 6v6h-6a3 3 0 1 0-6 0H1v-6a3 3 0 1 0 0-6z" fill="#fff" /></Svg>
        <Svg className="ml-[13px] h-[11px] w-[11px]"><path d="M2 3h20v18H2z" stroke="#fff" strokeWidth="3.500" /><path d="M15 2h8v20h-8z" fill="#fff" /></Svg>
        <Svg className="ml-[10px] h-[17px] w-[17px]"><circle cx="12" cy="12" r="12" fill="#a9c7e6" /><path d="M2 14q10-3 20 0-2 9-10 10T2 14" fill="#283a5c" /><path d="M9 6q3-4 6 0l-1 4 3 4-2 8h-5l-2-7 2-5z" fill="#e3b7cf" /></Svg>
        <Svg box="0 0 4 12" className="ml-[14px] h-[11px] w-[4px]"><path d="M1 1h2v2H1zM1 5h2v2H1zM1 9h2v2H1z" fill="#fff" /></Svg>
      </div>
      <div className="flex h-[27px] items-center border-b border-[#777] bg-[#525252] pb-[4px] text-[10px] text-[#e2e2e2]">
        <Svg className="ml-[11px] h-[9px] w-[11px]"><path d="M3 22V4" stroke="#4285f4" strokeWidth="5" /><path d="M21 22V4" stroke="#34a853" strokeWidth="5" /><path d="m2 4 10 9 10-9" stroke="#ea4335" strokeWidth="5" /></Svg>
        <T w={23} className="ml-[6px]">Gmail</T>
        <Svg box="0 0 12 9" className="ml-[13px] h-[9px] w-[12px]"><rect width="12" height="9" rx="2" fill="red" /><path d="m4.800 2.500 3.500 2-3.500 2z" fill="#fff" /></Svg>
        <T w={35} className="ml-[6px]">YouTube</T>
        <Svg className="ml-[13px] h-[11px] w-[11px]"><rect x="1" y="1" width="22" height="22" rx="2" fill="#34a853" /><path d="m1 22 12-11 10 11z" fill="#dfe8f5" /><path d="M1 23 18 5" stroke="#fbc02d" strokeWidth="4" /><path d="M12 7a6 6 0 0 1 12 0q0 4-6 10-6-6-6-10" fill="#ea4335" /></Svg>
        <T w={22} className="ml-[6px]">Maps</T>
        <Svg className="ml-[13px] h-[11px] w-[12px]"><path d="M8 6h16v18H13z" fill="#dcdcdc" /><path d="M0 0h13l5 18H0z" fill="#4a8bf0" /><circle cx="7" cy="9" r="3.500" stroke="#fff" strokeWidth="2" /></Svg>
        <T w={35} className="ml-[5px]">Translate</T>
        <div className="ml-[12px] flex h-[12px] w-[12px] items-center justify-center rounded-[2px] bg-[#6610f2] text-[10px] font-bold text-white">B</div>
        <T w={62} className="ml-[6px]">webside coding</T>
      </div>
      <div className="flex h-[442px]">
        <div className="relative h-[442px] w-[950px] shrink-0">
          <div className="relative z-10 flex h-[52px] items-center bg-[#111] text-[11px] text-white shadow-[0_6px_28px_#00000055]">
            <T w={26} className="ml-[706px]">Home</T>
            <Svg className="ml-[45px] h-[11px] w-[11px]"><circle cx="10" cy="10" r="7.500" stroke="#fff" strokeWidth="5" /><path d="m15 15 8 8" stroke="#fff" strokeWidth="5" /></Svg>
            <div className="absolute top-0 left-[178px] flex w-[78px] flex-col">
              <Svg box="0 0 70 51" className="ml-[2px] h-[51px] w-[70px]">
                <defs>
                  <linearGradient id="leafL" x1="0" y1="1" x2="1" y2="0"><stop offset="0" stopColor="#087a36" /><stop offset=".5" stopColor="#77b82e" /><stop offset="1" stopColor="#b2cd35" /></linearGradient>
                  <linearGradient id="leafR" x1="0" y1="0" x2="1" y2="1"><stop offset="0" stopColor="#b2cd35" /><stop offset=".55" stopColor="#67b22f" /><stop offset="1" stopColor="#087a36" /></linearGradient>
                  <radialGradient id="disc"><stop offset="0" stopColor="#6f8f70" /><stop offset=".6" stopColor="#eee" /><stop offset="1" stopColor="#fff" /></radialGradient>
                </defs>
                <ellipse cx="35" cy="47" rx="35" ry="4" fill="url(#disc)" />
                <path d="M2 0h18q20 14 16 37Q4 36 2 0Z" fill="url(#leafL)" />
                <path d="M66 0q9 36-26 39-3-22 26-39Z" fill="url(#leafR)" />
                <path d="M6 0q8 27 31 37v7M66 1Q62 26 40 38l-3 7" stroke="#0a6b33" strokeWidth="1.300" />
                <path d="M9 10q5 6 12 8M13 18q6 5 14 5M24 12q4 7 2 15M33 20q2 6-1 12M62 11q-2 6-8 9M50 15q-2 7-1 12" stroke="#e2f1bd" strokeWidth=".9" />
              </Svg>
              <T w={76} className="mt-[2px] text-[17px] text-[#35ac53]">Go Green.</T>
            </div>
          </div>
          <div className="flex h-[107px] items-start text-[9px] text-[#777]">
            <div className="mt-[5px] ml-[170px] h-[23px] w-[297px] rounded-[2px] bg-[#e1e5e9] pt-[6px] pl-[8px]"><T w={22}>Height</T></div>
            <div className="ml-[16px] w-[164px]">
              <div className="flex h-[17px] items-center">
                <div className="flex h-[17px] w-[48px] items-center border border-t-0 border-[#999] bg-[#ddd] pb-px pl-[4px] text-[#333]"><T w={39}>Choose File</T></div>
                <T w={48} className="mb-px ml-[2px]">No file chosen</T>
              </div>
              <div className="mt-[10px] h-[58px] w-[57px] border border-[#d0d0d0]" />
            </div>
            <div className={pageButton + " bg-[#6cc644]"}><T w={23}>SHOW</T></div>
          </div>
          <div className="flex">
            <div className={pageButton + " ml-[199px] bg-[#6fc845]"}><T w={18}>NEW</T></div>
            <div className={pageButton + " ml-[32px] bg-[#a2dc87]"}><T w={20}>SAVE</T></div>
            <div className={pageButton + " ml-[72px] bg-[#a2dc87]"}><T w={29}>UPDATE</T></div>
            <div className={pageButton + " ml-[30px] bg-[#a2dc87]"}><T w={28}>DELETE</T></div>
          </div>
          <PlantTable />
        </div>
        <div className="flex w-[12px] flex-col items-center bg-[#f1f1f1]">
          <Svg box="0 0 6 4" className="mt-[5px] h-[3px] w-[5px]"><path d="M0 4h6L3 0z" fill="#444" /></Svg>
          <div className="mt-[44px] h-[57px] w-[11px] bg-[#c1c1c1]" />
          <Svg box="0 0 6 4" className="mt-[325px] h-[4px] w-[6px]"><path d="M0 0h6L3 4z" fill="#444" /></Svg>
        </div>
      </div>
      <div className="absolute bottom-[14px] left-[899px] flex h-[23px] w-[23px] items-center justify-center bg-[#6cc644]">
        <Svg box="0 0 9 6" className="h-[6px] w-[8px]"><path d="m1 5 3.500-4L8 5" stroke="#fff" strokeWidth="1.400" /></Svg>
      </div>
      <div className="absolute bottom-[14px] left-0 flex h-[17px] w-[117px] items-center rounded-tr-[3px] bg-black pl-[4px] text-[10px] text-[#ccc]"><T w={107}>localhost:38528/index.html</T></div>
      <div className="absolute bottom-0 left-0 flex h-[14px] w-full items-start overflow-hidden bg-linear-to-r from-[#23222c] via-[#1c2530] to-[#14283a] text-[10px] text-[#ddd]">
        <div className="mt-[9px] ml-[17px] h-[14px] w-[14px] rounded-full bg-[#fbb10d]" />
        <T w={19} className="mt-[7px] ml-[7px]">36°C</T>
        <div className="mt-[10px] ml-[164px] flex gap-px"><div className="h-[8px] w-[8px] bg-[#4cc2f5]" /><div className="h-[8px] w-[9px] bg-[#4cc2f5]" /></div>
        <div className="mt-[6px] ml-[12px] flex h-[20px] w-[162px] justify-between rounded-t-full bg-[#393b42] px-[8px]">
          <div className="mt-[6px] h-[6px] w-[6px] rounded-full border border-[#ccc]" />
          <div className="mt-[4px] h-[12px] w-[12px] rounded-full border-2 border-[#257ba8]" />
        </div>
        <div className="mt-[10px] ml-[15px] h-[8px] w-[14px] bg-[#eee]" />
        <div className="mt-[10px] ml-[16px] h-[14px] w-[14px] rounded-full bg-[#8879d8]" />
        <div className="mt-[9px] ml-[18px] h-[17px] w-[17px] rounded-full border-[3px] border-[#1fc0ef]" />
        <div className="mt-[9px] ml-[16px] h-[17px] w-[13px] rounded-full bg-[#e24335]" />
        <div className="-ml-[4px] mt-[5px] h-[11px] w-[11px] rounded-full bg-[#c3c8de]" />
        <div className="mt-[10px] ml-[13px] h-[8px] w-[18px] rounded-t-[2px] bg-[#f5b71e]" />
        <div className="mt-[10px] ml-[15px] h-[8px] w-[17px] border-t-2 border-[#2da3df] bg-[#eee]" />
        <div className="mt-[10px] ml-[16px] h-[8px] w-[18px] bg-[#0096d6]" />
        <div className="mt-[10px] ml-[19px] h-[8px] w-[14px] bg-[#3a8de0]" />
        <div className="mt-[10px] ml-[15px] h-[8px] w-[18px] bg-[#712a94]" />
        <div className="mt-[3px] ml-[10px] h-[14px] w-[28px] rounded-t-[3px] bg-[#2a3947] px-[6px] pt-[6px]"><div className="h-[8px] w-[13px] rounded-t-[2px] border-t-4 border-dotted border-[#d33b15] bg-white" /></div>
        <T w={17} className="mt-[8px] ml-[44px]">ENG</T>
        <T w={22} className="mt-[7px] ml-[99px]">17:27</T>
        <div className="mt-[11px] ml-[12px] h-[8px] w-[8px] rounded-full bg-[#b98adb]" />
      </div>
    </div>
  );
}

function StatusBar() {
  return (
    <div className="flex h-[33px] items-center border-t border-white bg-[#f3f3f3] text-[16px] leading-none text-[#333]">
      <T w={96} className="ml-[11px]">Page 28 of 69</T>
      <T w={83} className="ml-[26px]">3292 words</T>
      <Svg className="ml-[27px] h-[21px] w-[22px]">
        <path d="M10 21H1V1h7q2 0 3 2 1-2 3-2h7v10M11 3v14M12 12l11 11M22 12 11.500 23" stroke="#333" strokeWidth="1.800" />
      </Svg>
      <T w={156} className="ml-[25px]">English (United States)</T>
      <Svg className="ml-[26px] h-[22px] w-[22px]">
        <circle cx="10" cy="3" r="2.500" stroke="#333" strokeWidth="1.700" />
        <path d="M7 6 2 3.500Q0 4 1.500 6L7 9v5L4 22q1 2 2.500.5L10 16l1 2M13 6l5-2.500q2 .5.500 2.500L13 9v3M11 13l12 10.500M23 13 11 23.500" stroke="#333" strokeWidth="1.700" />
      </Svg>
      <T w={166} className="ml-[5px]">Accessibility: Investigate</T>
      <Svg className="ml-[729px] h-[22px] w-[21px]">
        <path d="M1 6V1h5M18 1h5v5M1 18v5h5M23 18v5h-5M6 4.500h7l5 5V19H6zM13 4.500v5h5" stroke="#333" strokeWidth="1.900" />
      </Svg>
      <T w={39} className="ml-[4px]">Focus</T>
      <Svg className="ml-[35px] h-[21px] w-[20px]">
        <path d="M12 4Q8 1 1 2v18q7-1 11 2.500Q16 19 23 20V2q-7-1-11 2zv18M4 6.500h5M4 10.500h5M4 14.500h5M15 6.500h5M15 10.500h5M15 14.500h5" stroke="#333" strokeWidth="1.800" />
      </Svg>
      <div className="ml-[21px] flex h-[32px] w-[60px] items-center justify-center bg-[#dfdfdf]">
        <Svg box="0 0 17 22" className="h-[22px] w-[17px]"><path d="M1 1h15v20H1zM3.500 4.500h10M3.500 7.500h10M3.500 10.500h10M3.500 13.500h10M3.500 16.500h10" stroke="#222" strokeWidth="1.500" /></Svg>
      </div>
      <Svg className="ml-[20px] h-[22px] w-[22px]">
        <path d="M9 21H1V1h20v7M4 5h14M4 9h7M4 13h4M4 17h4" stroke="#333" strokeWidth="1.700" />
        <circle cx="16.500" cy="16.500" r="6.700" fill="#f3f3f3" stroke="#222" strokeWidth="1.700" />
        <path d="M10 14.500h13M10 18.500h13M16.500 10q-5 6.500 0 13 5-6.500 0-13" stroke="#222" strokeWidth="1.300" />
      </Svg>
      <div className="mb-px ml-[27px] h-px w-[11px] bg-[#333]" />
      <div className="ml-[9px] flex h-[17px] w-[148px] items-center">
        <div className="h-[2px] w-[70px] bg-[#6a6a6a]" /><div className="h-[17px] w-[8px] bg-[#555]" /><div className="h-[2px] w-[70px] bg-[#6a6a6a]" />
      </div>
      <Svg box="0 0 11 11" className="ml-[8px] h-[11px] w-[11px]"><path d="M5.500 0v11M0 5.500h11" stroke="#333" strokeWidth="1.100" /></Svg>
      <T w={39} className="ml-[20px]">100%</T>
    </div>
  );
}

function Taskbar() {
  return (
    <div className="flex h-[72px] items-center border-t-2 border-[#42504f] bg-[linear-gradient(90deg,#26222a_0,#1f2638_120px,#2c2413_235px,#26260f_340px,#2d2213_510px,#24272c_620px,#242229_850px,#14283a_980px,#12293f_1200px,#132a3b_1920px)] pb-[2px] leading-none text-white">
      <Svg box="0 0 34 32" className="ml-[17px] h-[32px] w-[34px]">
        <defs>
          <linearGradient id="moon" x1="0" y1="0" x2="1" y2="1"><stop offset="0" stopColor="#b8c2cc" /><stop offset="1" stopColor="#6c757e" /></linearGradient>
        </defs>
        <circle cx="16" cy="16" r="16" fill="url(#moon)" />
        <path d="M18 27a4.500 4.500 0 0 1 0-8 6 6 0 0 1 11-1.500 5 5 0 0 1 0 9.500z" fill="#e8ebf1" />
      </Svg>
      <Svg box="0 0 35 35" className="ml-[393px] h-[35px] w-[35px]">
        <defs>
          <linearGradient id="win" x1="0" y1="0" x2="1" y2="1"><stop offset="0" stopColor="#7df3ff" /><stop offset="1" stopColor="#0a95f8" /></linearGradient>
        </defs>
        <path d="M1 0h33q1 0 1 1v33q0 1-1 1H1q-1 0-1-1V1q0-1 1-1" fill="url(#win)" />
        <path d="M17.500 0v35M0 17.500h35" stroke="#28261a" strokeWidth="1.500" />
      </Svg>
      <div className="ml-[20px] flex h-[48px] w-[330px] items-center rounded-full border border-white/5 bg-white/13 text-[22px] text-[#d3d3d3]">
        <Svg box="0 0 22 23" className="ml-[17px] h-[23px] w-[22px]"><circle cx="9.500" cy="9.500" r="8" fill="#ffffff20" stroke="#eee" strokeWidth="2.600" /><path d="m15 16 5.500 6" stroke="#eee" strokeWidth="3" strokeLinecap="round" /></Svg>
        <T w={61} className="mb-px ml-[16px]">Search</T>
      </div>
      <Svg box="0 0 36 34" className="ml-[18px] h-[34px] w-[36px]">
        <rect x="9" width="27" height="25" rx="1" fill="#f4f4f4" /><rect y="9" width="27" height="25" rx="1" fill="#777" fillOpacity=".85" /><path d="M9 9h18v16H9z" fill="#c4c4c4" />
      </Svg>
      <Svg box="0 0 34 34" className="ml-[30px] h-[34px] w-[34px]">
        <defs>
          <linearGradient id="chat" x1="0" y1="0" x2="1" y2="1"><stop offset="0" stopColor="#9a63b0" /><stop offset=".4" stopColor="#7e83de" /><stop offset="1" stopColor="#4b4cc0" /></linearGradient>
        </defs>
        <path d="M17 0a17 17 0 1 1-6 33L0 34l2-9A17 17 0 0 1 17 0" fill="url(#chat)" />
        <rect x="7" y="10" width="14" height="14" rx="2.500" fill="#fff" /><path d="M23 14.500q2-3 4-3v11q-2 0-4-3z" fill="#fff" />
      </Svg>
      <Svg box="0 0 36 36" className="ml-[32px] h-[36px] w-[36px]">
        <path fillRule="evenodd" d="M18 0a18 18 0 0 1 0 36q11-6 12.500-17A12.600 12.600 0 1 0 11 29.500q5 2 4.700 6.400A18 18 0 0 1 18 0Z" fill="#00caff" />
      </Svg>
      <Svg box="0 0 36 36" className="ml-[30px] h-[36px] w-[36px]">
        <path d="M18 18 2.400 9A18 18 0 0 1 33.600 9z" fill="#e33b2e" /><path d="M18 18 2.400 9A18 18 0 0 0 18 36l8-13z" fill="#249a45" /><path d="M18 9h15.600A18 18 0 0 1 18 36l8-13z" fill="#fcc21b" />
        <circle cx="18" cy="18" r="9" fill="#fff" /><circle cx="18" cy="18" r="7" fill="#2f7de9" />
      </Svg>
      <Svg box="0 0 36 34" className="ml-[30px] h-[34px] w-[36px]">
        <path d="M0 1q0-1 1-1h9q2 0 4 3l1 3H0z" fill="#dc9a04" /><path d="M0 6h13l3-3h19q1 0 1 1v28q0 1-1 1H1q-1 0-1-1z" fill="#fcc93c" />
        <path d="M6 33v-7q0-4 4-4h16q4 0 4 4v7z" fill="#1280d4" /><path d="M11 27.500h14" stroke="#0b4d95" strokeWidth="1.700" />
      </Svg>
      <Svg box="0 0 35 36" className="ml-[30px] h-[36px] w-[35px]">
        <path d="M0 6h35v26q0 4-4 4H4q-4 0-4-4z" fill="#f2f2f2" /><path d="M9 8V2h17v6" stroke="#2cb3ee" strokeWidth="2" />
        <path d="M10 13.500h7v7h-7z" fill="#f25022" /><path d="M18 13.500h7v7h-7z" fill="#7fba00" /><path d="M10 21.500h7v7h-7z" fill="#00a4ef" /><path d="M18 21.500h7v7h-7z" fill="#ffb900" />
      </Svg>
      <div className="ml-[31px] flex h-[36px] w-[36px] items-center justify-center rounded-[2px] bg-[#0096d6] text-[13px]">
        <T w={15}>my</T><T w={14} className="font-bold text-[17px] italic">hp</T>
      </div>
      <div className="mt-[13px] ml-[30px] flex w-[36px] flex-col items-center">
        <Svg box="0 0 36 36" className="h-[36px] w-[36px]"><path d="M0 0h36v36H0z" fill="#712a94" /><path d="M24.500 5 30 7.500v21L24.500 31 13 20.500 7 25.500 4 24V12l3-1.500 6 5zM7.500 15v6l3-3zM24.500 13.500 18 18l6.500 4.500z" fill="#fff" fillRule="evenodd" /></Svg>
        <div className="mt-[6px] h-[5px] w-[9px] rounded-full bg-[#9aa1a8]" />
      </div>
      <div className="mt-[13px] ml-[30px] flex w-[35px] flex-col items-center">
        <WordIcon className="h-[35px] w-[35px]" />
        <div className="mt-[7px] h-[5px] w-[9px] rounded-full bg-[#9aa1a8]" />
      </div>
      <div className="ml-[19px] flex h-[60px] w-[60px] flex-col items-center rounded-[6px] border border-white/5 bg-white/9 pt-[11px]">
        <Svg box="0 0 36 36" className="h-[36px] w-[36px]">
          <rect width="27" height="27" rx="3" fill="#eef0f3" />
          <path d="M3 5h4M9.500 5h4M16 5h4M3 11h4M3 17h4" stroke="#d83b01" strokeWidth="4" />
          <path d="M9 21.500h20M21 8v19" stroke="#8f979f" strokeWidth="3.500" />
          <circle cx="32" cy="19" r="3" stroke="#1ea5e8" strokeWidth="2.500" /><circle cx="19.500" cy="32" r="3" stroke="#1ea5e8" strokeWidth="2.500" /><path d="M25 23.500 30 21M21 29l2-4" stroke="#1ea5e8" strokeWidth="2.500" />
        </Svg>
        <div className="mt-[6px] h-[5px] w-[24px] rounded-full bg-[#dc9ae0]" />
      </div>
      <Svg box="0 0 16 9" className="ml-[78px] h-[9px] w-[16px]"><path d="m1 8 7-7 7 7" stroke="#fff" strokeWidth="2" /></Svg>
      <div className="ml-[32px] flex flex-col items-center gap-[5px] text-[17px]"><T w={34}>ENG</T><T w={18}>IN</T></div>
      <Svg className="ml-[28px] h-[25px] w-[24px]">
        <path d="M12 23.200A11.200 11.200 0 1 1 23.200 12M1 8h21M1 16h11M12 1Q3 12 10.500 23M12 1q5 4 5 11" stroke="#fff" strokeWidth="1.500" />
        <circle cx="18" cy="18" r="5.700" stroke="#fff" strokeWidth="1.600" /><path d="m14.500 21.500 7-7" stroke="#fff" strokeWidth="1.500" />
      </Svg>
      <Svg className="ml-[11px] h-[25px] w-[25px]">
        <path d="M1 9h4.500L11 3.500v17L5.500 15H1zM14 9q2 3 0 6M17 6.500q4 5.500 0 11M20 4q6 8 0 16" stroke="#fff" strokeWidth="1.500" />
      </Svg>
      <Svg box="0 0 25 17" className="ml-[12px] h-[17px] w-[25px]">
        <rect x="1" y="1" width="20" height="15" rx="3.500" stroke="#fff" strokeWidth="1.700" /><rect x="3.500" y="3.800" width="6" height="9.400" rx="1" fill="#fff" /><path d="M23 6v5" stroke="#fff" strokeWidth="2.500" />
      </Svg>
      <div className="mb-[2px] ml-[24px] flex w-[93px] flex-col items-end gap-[6px] text-[18px]"><T w={43}>09:33</T><T w={93}>04-04-2023</T></div>
    </div>
  );
}

export default function App() {
  return (
    <div className="flex h-[1080px] w-[1920px] flex-col overflow-hidden bg-[#efefef] font-['Noto_Sans','Open_Sans',sans-serif]">
      <TitleBar />
      <TabBar />
      <Ribbon />
      <div className="flex h-[656px] shrink-0 bg-[#efefef]">
        <div className="ml-[351px] flex w-[1192px] border-x border-[#bdbdbd] bg-white">
          <div className="ml-[47px] w-[1096px] border-x border-black pt-[52px] pl-[119px]">
            <BrowserShot />
          </div>
        </div>
      </div>
      <StatusBar />
      <Taskbar />
    </div>
  );
}
